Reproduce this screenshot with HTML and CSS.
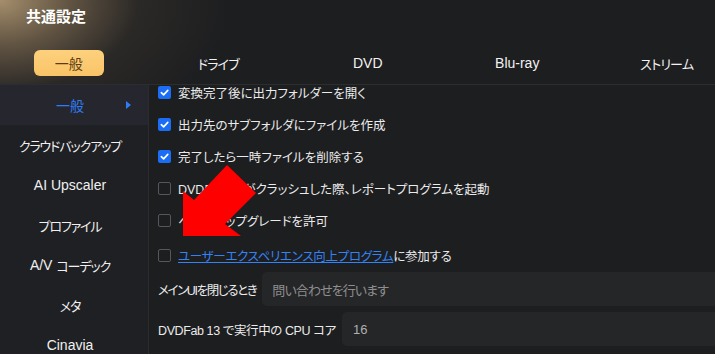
FILE: index.html
```html
<!DOCTYPE html>
<html lang="ja">
<head>
<meta charset="utf-8">
<title>共通設定</title>
<link rel="stylesheet" href="styles.css">
</head>
<body>
<div class="app">
  <header class="header">
    <div class="title">共通設定</div>
    <nav class="tabs">
      <div class="tab"><span class="pill">一般</span></div>
      <div class="tab ja">ドライブ</div>
      <div class="tab">DVD</div>
      <div class="tab">Blu-ray</div>
      <div class="tab ja">ストリーム</div>
    </nav>
  </header>
  <div class="main">
    <aside class="sidebar">
      <div class="side-item active">一般<span class="caret"></span></div>
      <div class="side-item"><span class="ja">クラウドバックアップ</span></div>
      <div class="side-item">AI Upscaler</div>
      <div class="side-item"><span class="ja">プロファイル</span></div>
      <div class="side-item">A/V&nbsp;<span class="ja">コーデック</span></div>
      <div class="side-item"><span class="ja">メタ</span></div>
      <div class="side-item">Cinavia</div>
    </aside>
    <section class="content">
      <div class="opts">
        <div class="opt"><span class="cb checked"><svg viewBox="0 0 13 13" width="13" height="13"><path d="M3.3 6.7 L5.6 8.9 L9.8 4.4" fill="none" stroke="#fff" stroke-width="1.6" stroke-linecap="round" stroke-linejoin="round"/></svg></span><span>変換完了後に出力フォルダーを開く</span></div>
        <div class="opt"><span class="cb checked"><svg viewBox="0 0 13 13" width="13" height="13"><path d="M3.3 6.7 L5.6 8.9 L9.8 4.4" fill="none" stroke="#fff" stroke-width="1.6" stroke-linecap="round" stroke-linejoin="round"/></svg></span><span>出力先のサブフォルダにファイルを作成</span></div>
        <div class="opt"><span class="cb checked"><svg viewBox="0 0 13 13" width="13" height="13"><path d="M3.3 6.7 L5.6 8.9 L9.8 4.4" fill="none" stroke="#fff" stroke-width="1.6" stroke-linecap="round" stroke-linejoin="round"/></svg></span><span>完了したら一時ファイルを削除する</span></div>
        <div class="opt"><span class="cb"></span><span>DVDFab 13がクラッシュした際、レポートプログラムを起動</span></div>
        <div class="opt"><span class="cb"></span><span>ベータアップグレードを許可</span></div>
        <div class="opt opt-link"><span class="cb"></span><span class="tight"><a class="link">ユーザーエクスペリエンス向上プログラム</a>に参加する</span></div>
      </div>
      <div class="field field-first">
        <span class="field-label narrow">メインUIを閉じるとき</span>
        <div class="input placeholder">問い合わせを行います</div>
      </div>
      <div class="field field-second">
        <span class="field-label">DVDFab 13 で実行中の CPU コア</span>
        <div class="input value">16</div>
      </div>
    </section>
  </div>
  <svg class="arrow" viewBox="0 0 715 354" width="715" height="354">
    <polygon points="183,236 183,191 194,200 227,165 256,193 225,224 241,236" fill="#ff0000"/>
  </svg>
</div>
</body>
</html>
```

FILE: styles.css
```css
* { box-sizing: border-box; }
html, body {
  margin: 0;
  padding: 0;
}
body {
  width: 715px;
  height: 354px;
  overflow: hidden;
  background: #1d1e20;
  font-family: "Liberation Sans", "Noto Sans CJK JP", sans-serif;
  font-feature-settings: "palt";
  color: #ececec;
}
.app {
  position: relative;
  width: 715px;
  height: 354px;
  overflow: hidden;
}
.header {
  height: 85px;
  border-bottom: 1px solid #2c2d31;
  padding-top: 8px;
  display: flex;
  flex-direction: column;
  background:
    radial-gradient(ellipse 230px 150px at 0 0, rgba(172,148,112,0.95) 0%, rgba(120,102,78,0.75) 30%, rgba(60,54,46,0.45) 60%, rgba(29,30,32,0) 100%),
    #1d1e20;
}
.title {
  margin-left: 26px;
  height: 18px;
  line-height: 18px;
  font-size: 15px;
  font-weight: bold;
  color: #ffffff;
}
.tabs {
  display: flex;
  margin-top: 24px;
  margin-left: -6px;
  height: 26px;
}
.tab {
  flex: 0 0 149.5px;
  display: flex;
  align-items: center;
  justify-content: center;
  font-size: 14px;
  color: #f2f2f2;
}
.tab.ja {
  font-size: 13px;
  letter-spacing: -0.8px;
}
.pill {
  width: 70px;
  height: 26px;
  border-radius: 6px;
  background: linear-gradient(#fdd17d, #f9c467);
  color: #5a3d14;
  display: flex;
  align-items: center;
  justify-content: center;
}
.main {
  display: flex;
  height: 269px;
}
.sidebar {
  width: 149px;
  flex: 0 0 149px;
  background: #1f2023;
  border-right: 1px solid #2b2c30;
}
.side-item {
  position: relative;
  height: 40px;
  display: flex;
  align-items: center;
  justify-content: center;
  padding-right: 8px;
  font-size: 14px;
  color: #f0f0f0;
  white-space: nowrap;
}
.side-item .ja {
  font-size: 13px;
  letter-spacing: -1.1px;
}
.side-item.active {
  background: #25262e;
  color: #2f7df5;
}
.caret {
  position: absolute;
  right: 17px;
  top: 16px;
  width: 0;
  height: 0;
  border-top: 4px solid transparent;
  border-bottom: 4px solid transparent;
  border-left: 5px solid #2f7df5;
}
.content {
  flex: 1;
  padding-left: 9px;
  overflow: hidden;
  display: flex;
  flex-direction: column;
}
.opts {
  margin-top: -9px;
  display: flex;
  flex-direction: column;
}
.opt {
  height: 32px;
  display: flex;
  align-items: center;
  gap: 7px;
  font-size: 12.5px;
  color: #ebebeb;
  white-space: nowrap;
}
.opt .tight {
  letter-spacing: -0.3px;
}
.opt-link {
  margin-top: 3px;
}
.cb {
  width: 13px;
  height: 13px;
  flex: 0 0 13px;
  border: 1px solid #56575b;
  border-radius: 2px;
  display: block;
}
.cb.checked {
  border: none;
  background: #1b6ef3;
}
.cb svg { display: block; }
.link {
  color: #3383f7;
  text-decoration: underline;
}
.field {
  display: flex;
  align-items: center;
  gap: 6px;
  height: 34px;
  font-size: 12.5px;
  white-space: nowrap;
}
.field-first { margin-top: 1px; }
.field-second { margin-top: 6px; }
.field-label {
  color: #ebebeb;
  letter-spacing: -0.4px;
}
.field-label.narrow {
  letter-spacing: -1.4px;
}
.input {
  flex: 1;
  height: 34px;
  background: #252628;
  border-radius: 5px 0 0 5px;
  display: flex;
  align-items: center;
  padding-left: 10px;
  font-size: 13px;
}
.placeholder { color: #8e8e8e; letter-spacing: -0.9px; }
.value { color: #b0b0b0; padding-left: 11px; }
.arrow {
  position: absolute;
  left: 0;
  top: 0;
  pointer-events: none;
}
```
